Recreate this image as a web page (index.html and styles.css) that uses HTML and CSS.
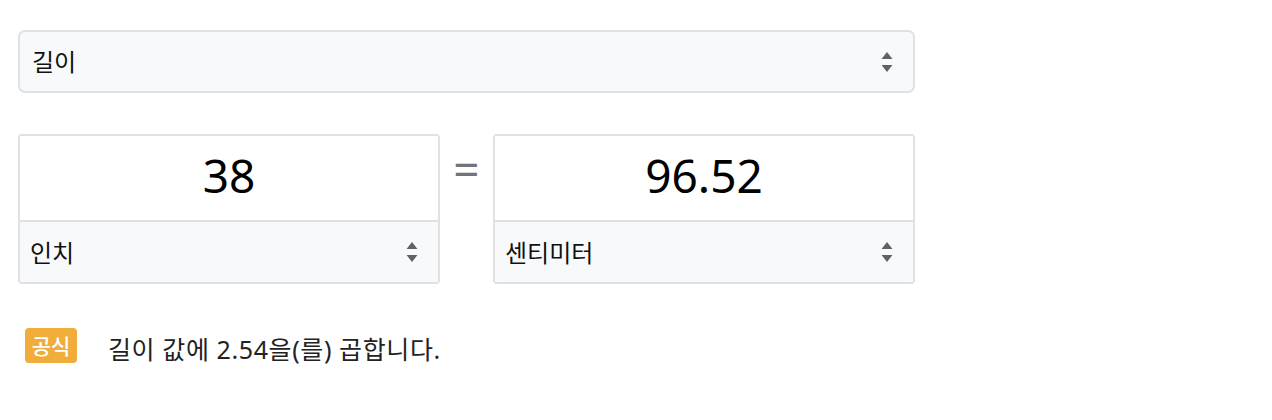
FILE: index.html
```html
<!DOCTYPE html>
<html lang="ko">
<head>
<meta charset="utf-8">
<link rel="stylesheet" href="styles.css">
</head>
<body>
<div class="page">
  <div class="select select-main">
    <span class="select-label">길이</span>
    <svg class="updown" width="12" height="22" viewBox="0 0 12 22"><path d="M6 1 L11.5 8 H0.5 Z" fill="#5f6368"/><path d="M0.5 14 H11.5 L6 21 Z" fill="#5f6368"/></svg>
  </div>
  <div class="converter">
    <div class="unit-box">
      <div class="value">38</div>
      <div class="select select-unit">
        <span class="select-label">인치</span>
        <svg class="updown" width="12" height="22" viewBox="0 0 12 22"><path d="M6 1 L11.5 8 H0.5 Z" fill="#5f6368"/><path d="M0.5 14 H11.5 L6 21 Z" fill="#5f6368"/></svg>
      </div>
    </div>
    <div class="equals">=</div>
    <div class="unit-box">
      <div class="value">96.52</div>
      <div class="select select-unit">
        <span class="select-label">센티미터</span>
        <svg class="updown" width="12" height="22" viewBox="0 0 12 22"><path d="M6 1 L11.5 8 H0.5 Z" fill="#5f6368"/><path d="M0.5 14 H11.5 L6 21 Z" fill="#5f6368"/></svg>
      </div>
    </div>
  </div>
  <div class="formula">
    <span class="badge">공식</span>
    <span class="formula-text">길이 값에 2.54을(를) 곱합니다.</span>
  </div>
</div>
</body>
</html>
```

FILE: styles.css
```css
html, body {
  margin: 0;
  padding: 0;
  background: #ffffff;
}

body {
  font-family: "Noto Sans", "Noto Sans CJK KR", sans-serif;
  color: #202124;
}

.page {
  width: 897px;
  padding: 30px 0 0 18px;
}

.select {
  display: flex;
  align-items: center;
  justify-content: space-between;
  box-sizing: border-box;
  height: 63px;
  padding: 0 20px 2px 12px;
  background: #f8f9fa;
  border: 2px solid #dfe1e5;
  border-radius: 7px;
}

.select-label {
  font-size: 24px;
  color: #111111;
}

.updown {
  display: block;
  flex: none;
  margin-top: 2px;
}

.converter {
  display: flex;
  align-items: flex-start;
  margin-top: 41px;
}

.unit-box {
  width: 422px;
  height: 150px;
  box-sizing: border-box;
  border: 2px solid #dfe1e5;
  border-radius: 4px;
  display: flex;
  flex-direction: column;
  overflow: hidden;
}

.value {
  height: 84px;
  box-sizing: border-box;
  padding-bottom: 7px;
  display: flex;
  align-items: center;
  justify-content: center;
  font-size: 46px;
  color: #000000;
  background: #ffffff;
}

.select-unit {
  flex: 1;
  height: auto;
  border: none;
  border-top: 2px solid #dfe1e5;
  border-radius: 0;
  padding: 0 20px 2px 10px;
}

.equals {
  width: 53px;
  padding-top: 9px;
  text-align: center;
  font-size: 46px;
  line-height: 50px;
  color: #70757a;
}

.formula {
  display: flex;
  align-items: center;
  margin-top: 40px;
  padding-left: 7px;
}

.badge {
  width: 52px;
  height: 35px;
  display: flex;
  align-items: center;
  justify-content: center;
  background: #f0ad3c;
  color: #ffffff;
  font-size: 21px;
  font-weight: 500;
  border-radius: 4px;
}

.formula-text {
  margin-left: 31px;
  margin-top: 6px;
  font-size: 25px;
  letter-spacing: 0.6px;
  color: #222222;
}
```
